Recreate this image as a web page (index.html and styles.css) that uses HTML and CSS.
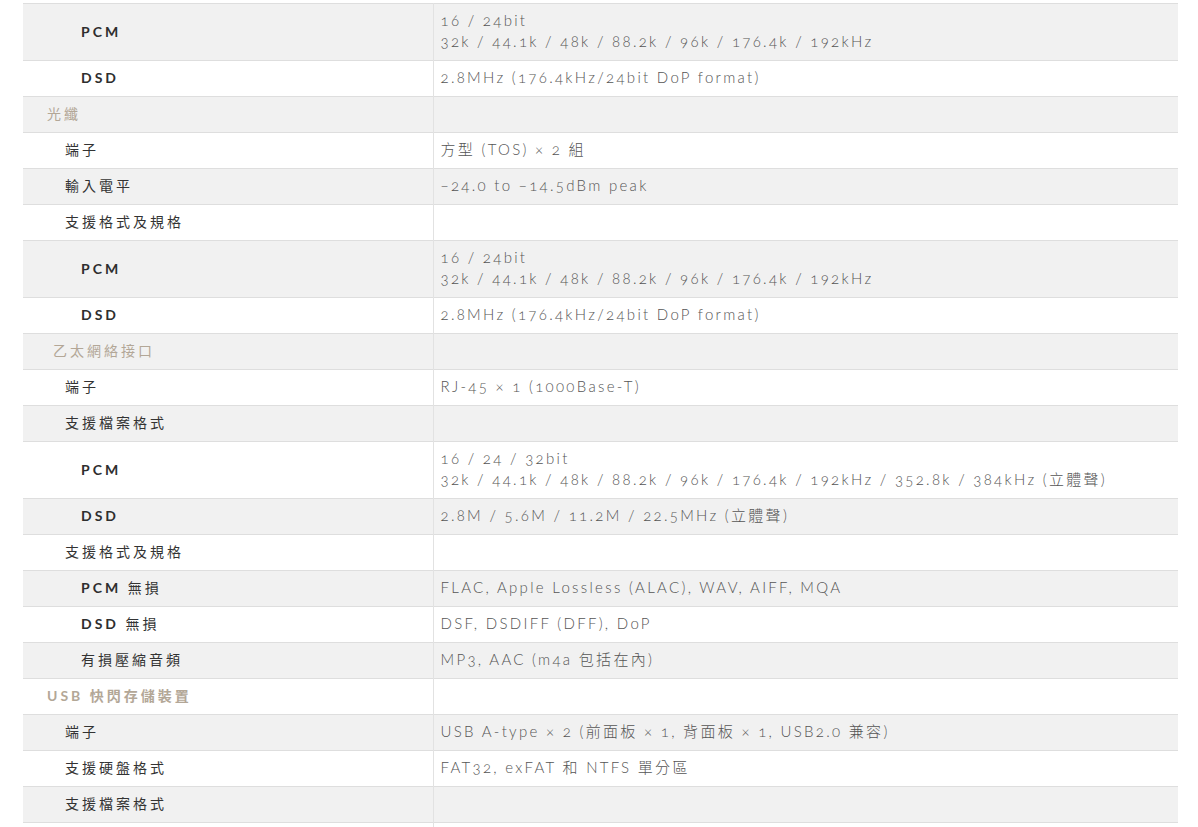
FILE: index.html
```html
<!DOCTYPE html>
<html lang="zh-Hant">
<head>
<meta charset="utf-8">
<title>規格</title>
<link rel="stylesheet" href="styles.css">
</head>
<body>
<div class="wrap">
<table class="spec">
  <colgroup><col class="c-label"><col class="c-value"></colgroup>
  <tbody>
    <tr class="tall"><th class="lv3"><span class="en">PCM</span></th><td>16 / 24bit<br>32k / 44.1k / 48k / 88.2k / 96k / 176.4k / 192kHz</td></tr>
    <tr><th class="lv3"><span class="en">DSD</span></th><td>2.8MHz (176.4kHz/24bit DoP format)</td></tr>
    <tr><th class="lv1 sec">光纖</th><td></td></tr>
    <tr><th class="lv2">端子</th><td>方型 (TOS) × 2 組</td></tr>
    <tr><th class="lv2">輸入電平</th><td>−24.0 to −14.5dBm peak</td></tr>
    <tr><th class="lv2">支援格式及規格</th><td></td></tr>
    <tr class="tall"><th class="lv3"><span class="en">PCM</span></th><td>16 / 24bit<br>32k / 44.1k / 48k / 88.2k / 96k / 176.4k / 192kHz</td></tr>
    <tr><th class="lv3"><span class="en">DSD</span></th><td>2.8MHz (176.4kHz/24bit DoP format)</td></tr>
    <tr><th class="lv1 sec shift">乙太網絡接口</th><td></td></tr>
    <tr><th class="lv2">端子</th><td>RJ-45 × 1 (1000Base-T)</td></tr>
    <tr><th class="lv2">支援檔案格式</th><td></td></tr>
    <tr class="tall"><th class="lv3"><span class="en">PCM</span></th><td>16 / 24 / 32bit<br>32k / 44.1k / 48k / 88.2k / 96k / 176.4k / 192kHz / 352.8k / 384kHz (立體聲)</td></tr>
    <tr><th class="lv3"><span class="en">DSD</span></th><td>2.8M / 5.6M / 11.2M / 22.5MHz (立體聲)</td></tr>
    <tr><th class="lv2">支援格式及規格</th><td></td></tr>
    <tr><th class="lv3"><span class="en">PCM</span> 無損</th><td>FLAC, Apple Lossless (ALAC), WAV, AIFF, MQA</td></tr>
    <tr><th class="lv3"><span class="en">DSD</span> 無損</th><td>DSF, DSDIFF (DFF), DoP</td></tr>
    <tr><th class="lv3">有損壓縮音頻</th><td>MP3, AAC (m4a 包括在內)</td></tr>
    <tr><th class="lv1 sec strong">USB 快閃存儲裝置</th><td></td></tr>
    <tr><th class="lv2">端子</th><td>USB A-type × 2 (前面板 × 1, 背面板 × 1, USB2.0 兼容)</td></tr>
    <tr><th class="lv2">支援硬盤格式</th><td>FAT32, exFAT 和 NTFS 單分區</td></tr>
    <tr><th class="lv2">支援檔案格式</th><td></td></tr>
    <tr><th class="lv2">&nbsp;</th><td></td></tr>
  </tbody>
</table>
</div>
</body>
</html>
```

FILE: styles.css
```css
html, body {
  margin: 0;
  padding: 0;
  background: #ffffff;
}

.wrap {
  padding: 3px 20px 0 23px;
}

.spec {
  width: 1155px;
  border-collapse: collapse;
  table-layout: fixed;
  font-family: Lato, "Noto Sans CJK TC", sans-serif;
  font-size: 14px;
}

.c-label { width: 410px; }
.c-value { width: 745px; }

.spec tr {
  height: 36px;
}

.spec tr.tall {
  height: 57px;
}

.spec tbody tr:nth-child(odd) {
  background: #f1f1f1;
}

.spec th,
.spec td {
  border-top: 1px solid #dedede;
  padding: 0 0 2px 0;
  vertical-align: middle;
  line-height: 21px;
}

.spec th {
  text-align: left;
  font-weight: 400;
  color: #333333;
  letter-spacing: 3px;
  border-right: 1px solid #e2e2e2;
}

.spec td {
  padding-left: 7px;
  color: #555555;
  font-size: 15px;
  font-weight: 300;
  letter-spacing: 2.3px;
  font-variant-numeric: oldstyle-nums;
}

.lv1 { padding-left: 24px !important; }
.lv2 { padding-left: 42px !important; }
.lv3 { padding-left: 58px !important; }

.spec th .en {
  font-weight: 700;
  color: #2e2e2e;
}

.spec th.sec {
  color: #b3a797;
}

.spec th.shift {
  padding-left: 30px !important;
}

.spec th.strong {
  font-weight: 700;
}
```
